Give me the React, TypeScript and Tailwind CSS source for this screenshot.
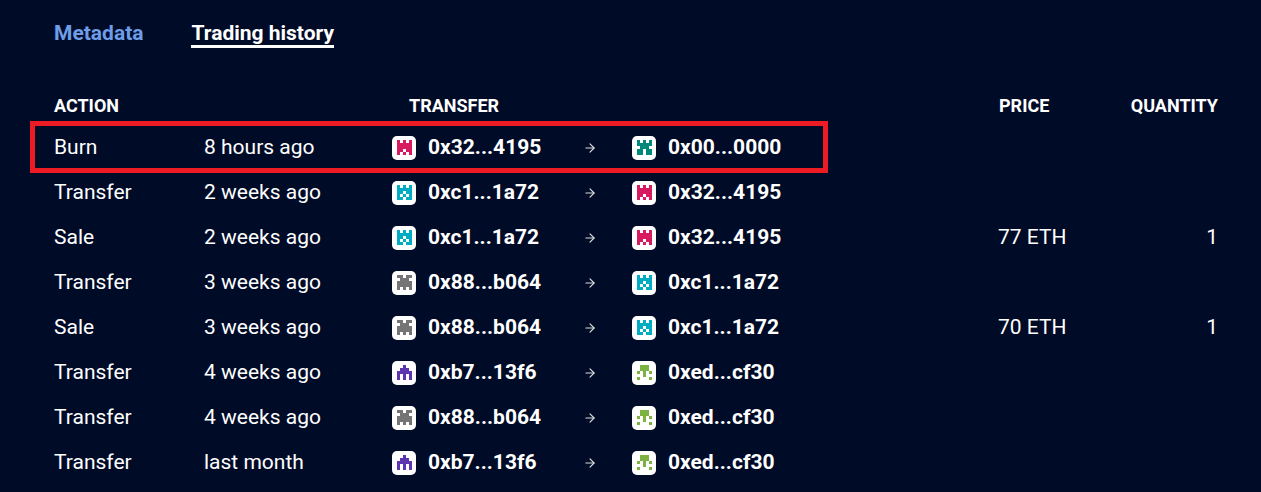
import { ArrowRight } from "lucide-react";

const PINK = { color: "#d81b60", grid: ["10101", "11111", "11111", "11011", "10101"] };
const TEAL = { color: "#00897b", grid: ["10101", "11111", "01110", "11011", "11011"] };
const CYAN = { color: "#00acc1", grid: ["10101", "11111", "11011", "10101", "11011"] };
const GRAY = { color: "#757575", grid: ["11011", "01110", "11111", "11111", "10101"] };
const PURPLE = { color: "#5e35b1", grid: ["00100", "01110", "11111", "10101", "10101"] };
const GREEN = { color: "#7cb342", grid: ["01110", "01110", "10101", "00100", "10001"] };

type Sprite = typeof PINK;

function Avatar({ sprite }: { sprite: Sprite }) {
  return (
    <span className="flex h-6 w-6 shrink-0 items-center justify-center rounded-[5px] bg-white">
      <svg width="15" height="15" viewBox="0 0 5 5" shapeRendering="crispEdges">
        {sprite.grid.map((row, y) =>
          row.split("").map((c, x) =>
            c === "1" ? <rect key={`${x}-${y}`} x={x} y={y} width="1" height="1" fill={sprite.color} /> : null
          )
        )}
      </svg>
    </span>
  );
}

const ROWS: {
  action: string;
  time: string;
  from: [Sprite, string];
  to: [Sprite, string];
  price?: string;
  qty?: string;
}[] = [
  { action: "Burn", time: "8 hours ago", from: [PINK, "0x32...4195"], to: [TEAL, "0x00...0000"] },
  { action: "Transfer", time: "2 weeks ago", from: [CYAN, "0xc1...1a72"], to: [PINK, "0x32...4195"] },
  { action: "Sale", time: "2 weeks ago", from: [CYAN, "0xc1...1a72"], to: [PINK, "0x32...4195"], price: "77 ETH", qty: "1" },
  { action: "Transfer", time: "3 weeks ago", from: [GRAY, "0x88...b064"], to: [CYAN, "0xc1...1a72"] },
  { action: "Sale", time: "3 weeks ago", from: [GRAY, "0x88...b064"], to: [CYAN, "0xc1...1a72"], price: "70 ETH", qty: "1" },
  { action: "Transfer", time: "4 weeks ago", from: [PURPLE, "0xb7...13f6"], to: [GREEN, "0xed...cf30"] },
  { action: "Transfer", time: "4 weeks ago", from: [GRAY, "0x88...b064"], to: [GREEN, "0xed...cf30"] },
  { action: "Transfer", time: "last month", from: [PURPLE, "0xb7...13f6"], to: [GREEN, "0xed...cf30"] },
];

function Address({ who }: { who: [Sprite, string] }) {
  return (
    <div className="flex items-center gap-3">
      <Avatar sprite={who[0]} />
      <span className="font-bold">{who[1]}</span>
    </div>
  );
}

export default function App() {
  return (
    <div className="relative h-[492px] w-full overflow-hidden bg-[#000b27] pl-[54px] pr-[43px] font-['Roboto',sans-serif] text-[21px] text-white">
      <div className="flex h-[85px] gap-[48px] pt-[18px]">
        <span className="h-[30px] font-bold text-[#6f9ee8]">Metadata</span>
        <span className="h-[30px] border-b-[3px] border-white font-bold">Trading history</span>
      </div>

      <div className="grid h-[40px] grid-cols-[338px_240px_367px_1fr] items-center text-[18px] font-bold">
        <span>ACTION</span>
        <span className="pl-[17px]">TRANSFER</span>
        <span />
        <div className="flex justify-between">
          <span>PRICE</span>
          <span>QUANTITY</span>
        </div>
      </div>

      {ROWS.map((r, i) => (
        <div key={i} className="grid h-[45px] grid-cols-[150px_188px_192px_48px_366px_1fr] items-center">
          <span>{r.action}</span>
          <span>{r.time}</span>
          <Address who={r.from} />
          <ArrowRight size={14} strokeWidth={2} className="-ml-px text-[#dddddd]" />
          <Address who={r.to} />
          <div className="flex justify-between">
            <span>{r.price}</span>
            <span>{r.qty}</span>
          </div>
        </div>
      ))}

      <div className="absolute left-[30px] top-[121px] h-[52px] w-[798px] border-[5px] border-[#ed1c24]" />
    </div>
  );
}
